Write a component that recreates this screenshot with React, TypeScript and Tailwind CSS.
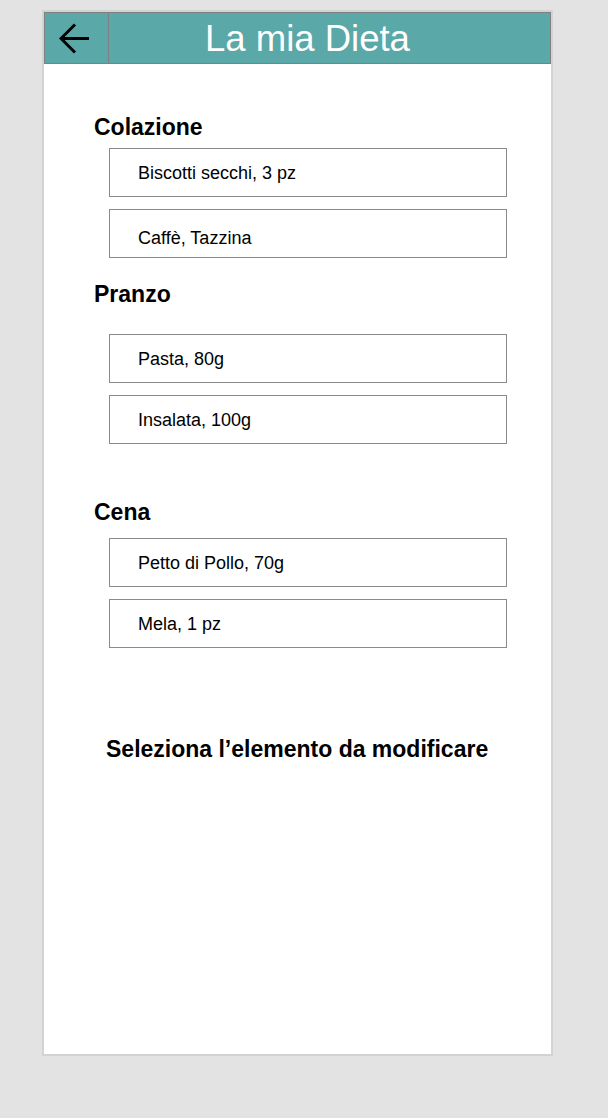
const FONT = { fontFamily: '"Liberation Sans", Arial, Helvetica, sans-serif' }

type Pasto = { titolo: string; voci: { testo: string; shift?: boolean }[]; mt: string; gapSotto: string }

const PASTI: Pasto[] = [
  {
    titolo: "Colazione",
    mt: "mt-[50px]",
    gapSotto: "mt-[8px]",
    voci: [{ testo: "Biscotti secchi, 3 pz" }, { testo: "Caffè, Tazzina", shift: true }],
  },
  {
    titolo: "Pranzo",
    mt: "mt-[23px]",
    gapSotto: "mt-[27px]",
    voci: [{ testo: "Pasta, 80g" }, { testo: "Insalata, 100g" }],
  },
  {
    titolo: "Cena",
    mt: "mt-[55px]",
    gapSotto: "mt-[13px]",
    voci: [{ testo: "Petto di Pollo, 70g" }, { testo: "Mela, 1 pz" }],
  },
]

function BackArrow() {
  return (
    <svg width="30" height="31" viewBox="0 0 30 31" fill="none">
      <path d="M16 1.5 L2 15.5 L16 29.5 M2 15.5 H30" stroke="#000" strokeWidth="3" />
    </svg>
  )
}

export default function App() {
  return (
    <div className="min-h-screen w-full bg-[#e3e3e3] pt-[10px] pb-[62px]" style={FONT}>
      <div className="ml-[42px] h-[1046px] w-[511px] border-2 border-[#d3d3d3] bg-white">
        {/* header */}
        <div className="flex h-[52px] border border-[#808080] bg-[#5aa9a8]">
          <button className="flex w-[64px] items-center border-r border-[#808080] pl-[14px]">
            <BackArrow />
          </button>
          <div className="flex-1 pl-[96px] pt-[3px] text-[36.5px] leading-[46px] text-white">La mia Dieta</div>
        </div>

        {PASTI.map((p) => (
          <section key={p.titolo} className={p.mt}>
            <h2 className="ml-[50px] text-[23px] font-bold leading-[26px] text-black">{p.titolo}</h2>
            <div className={`${p.gapSotto} flex flex-col gap-[12px]`}>
              {p.voci.map((v) => (
                <div
                  key={v.testo}
                  className="ml-[65px] flex h-[49px] w-[398px] items-center border border-[#8a8a8a] pl-[28px] text-[18px] leading-[20px] text-black"
                >
                  <span className={v.shift ? "pt-[9px]" : ""}>{v.testo}</span>
                </div>
              ))}
            </div>
          </section>
        ))}

        <p className="ml-[62px] mt-[88px] text-[23px] font-bold leading-[26px] text-black">
          Seleziona l’elemento da modificare
        </p>
      </div>
    </div>
  )
}
